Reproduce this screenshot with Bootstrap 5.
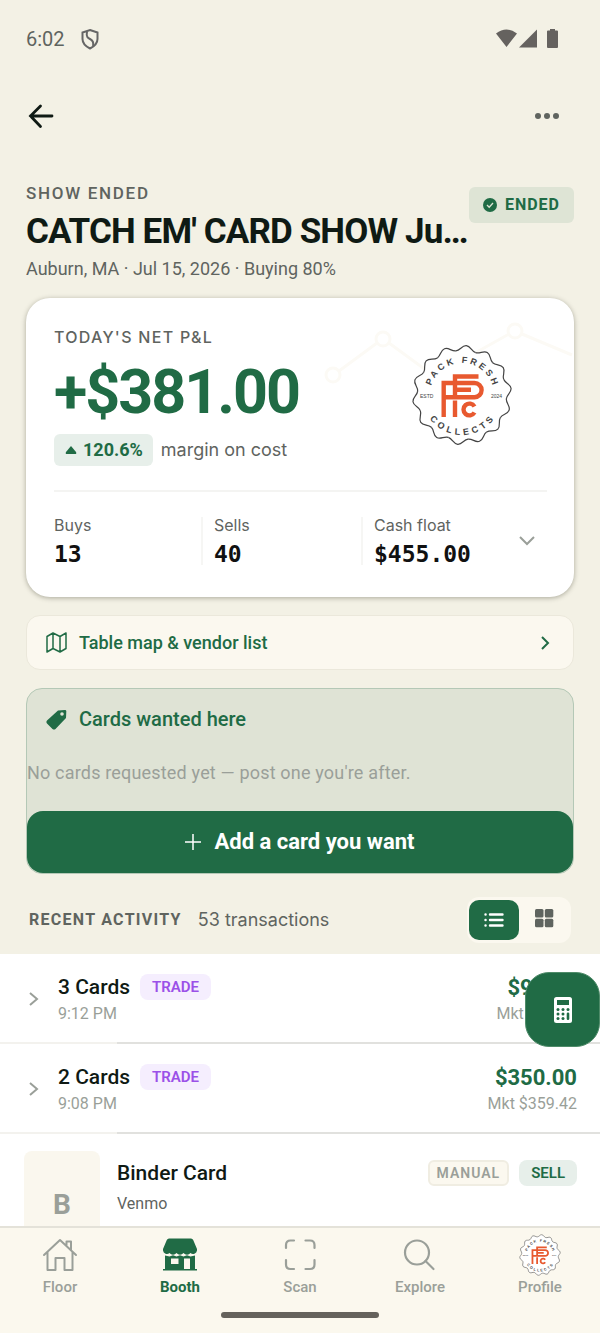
<!DOCTYPE html>
<html lang="en">
<head>
<meta charset="utf-8">
<meta name="viewport" content="width=device-width, initial-scale=1">
<title>Booth</title>
<link href="https://cdn.jsdelivr.net/npm/bootstrap@5.3.0/dist/css/bootstrap.min.css" rel="stylesheet">
<style>
:root{--green:#206b45;--ink:#0f1a14;--muted-ink:#5f645f;--soft:#9a9f99;--page:#f3f1e5;--cream:#fbf8ef}
body{font-family:Roboto,sans-serif;background:var(--page);color:var(--ink);font-size:18px;line-height:24px}
button{font-family:inherit}
a{text-decoration:none;color:inherit}
svg{display:block;flex:none}
.inter{font-family:Inter,sans-serif}
.soft{color:var(--soft)}
.dim{color:var(--muted-ink)}
.green{color:var(--green)}
.app-screen{height:100vh;overflow:hidden}
.status-bar{height:77px;padding:0 40px 0 26px;font-size:20px}
.top-bar{height:77px;padding:0 33px 0 26px}
.icon-btn{border:0;background:none;padding:0}
.gutter{padding:29px 26px 0}
.eyebrow{font-size:17px;letter-spacing:.1em;font-weight:500;line-height:20px}
.eyebrow.inter{font-size:16px;letter-spacing:.08em}
.show-title{font-size:35px;line-height:44px;font-weight:700;letter-spacing:-.025em;margin:7px 0 3px}
.ended{background:#dee4d5;border-radius:6px;height:36px;margin-top:4px;padding:0 14px;gap:8px;font-size:16px;font-weight:700;letter-spacing:1px}
.pnl{background:#fff;border-radius:24px;box-shadow:0 1px 5px rgba(60,60,40,.4);margin-top:17px;padding:29px 27px 32px 28px;position:relative}
.pnl-total{font-size:61px;line-height:64px;font-weight:700;letter-spacing:-2px;margin:13px 0 10px}
.margin-chip{background:#e7efea;border-radius:6px;height:32px;padding:0 10px 0 11px;gap:6px;font-weight:700}
.trend{position:absolute;right:0;top:14px;width:250px}
.pnl-seal{margin:17px 34px 0 0}
.stats{display:grid;grid-template-columns:147fr 160fr 186fr;border-top:2px solid #f4f4f2;margin-top:24px;padding-top:25px}
.stat{height:48px;font-size:16px;line-height:16px}
.stat + .stat{border-left:2px solid #f6f6f4;padding-left:11px}
.stat b{display:block;font:700 23px/24px "DejaVu Sans Mono",monospace;color:#111;margin-top:9px}
.map-link{height:55px;border:1px solid #ebe8db;border-radius:14px;background:var(--cream);margin-top:18px;padding:0 22px 0 19px;font-weight:500}
.wanted{border:1px solid #b4c8b6;border-radius:16px;background:#dfe3d5;margin-top:18px}
.wanted-title{font-size:20px;line-height:24px;font-weight:500;padding:18px 19px;gap:12px}
.wanted-note{padding:12px 0 26px;letter-spacing:.01em}
.add-btn{background:var(--green);border:0;border-radius:16px;height:62px;color:#fff;font-size:22px;font-weight:700;gap:13px}
.activity-head{height:80px;padding:12px 29px 0}
.activity-head h2{font-size:16px;letter-spacing:.08em;font-weight:700;line-height:24px}
.view-toggle{background:var(--cream);border-radius:12px;padding:3px 2px}
.view-toggle button{border:0;background:none;width:50px;height:40px;border-radius:10px;padding:0}
.view-toggle button.on{background:var(--green)}
.activity{background:#fff;min-height:0}
.txn{height:90px;padding:0 23px 0 28px;gap:18px}
.txn::after,.txn::before{content:"";position:absolute;left:117px;right:0;bottom:0;height:2px;background:#e1e1de}
.txn::before{left:0;right:auto;width:117px;background:#f3f2ee}
.chip-row{gap:10px}
.txn-name{font-size:21px;font-weight:500}
.amount{font-size:22px;line-height:28px;font-weight:700}
.tag-chip{border-radius:8px;height:26px;padding:0 12px;font-size:15px;font-weight:600;line-height:26px}
.trade{background:#f5eefe;color:#9b51e8}
.sell{background:#e7efea;color:var(--green)}
.manual{background:var(--cream);color:var(--soft);border:2px solid #f0ede2;letter-spacing:1px;font-size:14px;line-height:22px;padding:0 7px;border-radius:6px}
.meta{font-size:16px;line-height:20px}
.txn .meta{padding-top:4px}
.txn .amount + .meta{padding-top:2px}
.calc-btn{position:absolute;right:0;top:18px;width:75px;height:75px;border-radius:24px;border:1px solid #4f8b69;background:var(--green);padding:0;z-index:2}
.binder{padding:17px 23px 0 24px;gap:17px}
.binder-body{padding-top:9px}
.thumb{width:76px;height:108px;border-radius:8px;background:#faf7ee;font-size:28px;font-weight:700}
.tab-bar{background:#fbf8ee;border-top:2px solid #e4e2d9;height:107px}
.tab-bar a{width:20%;font-size:15px;line-height:20px;font-weight:500;color:var(--soft);padding-top:6px;gap:1px}
.tab-bar a.active{color:var(--green);font-weight:700}
.home-pill{bottom:15px;width:158px;height:6px;border-radius:3px;background:#65625c}
.seal-text{font-family:"Liberation Sans",sans-serif;font-weight:700;fill:#444}
.seal-year{font-weight:400}
</style>
</head>
<body>
<svg width="0" height="0" class="position-absolute" aria-hidden="true">
  <defs>
    <path id="scallop" d="M-9.900-43.400C-5.500-44.400-4.500-49.500 0-49.500S5.500-44.400 9.900-43.400"/>
    <path id="arc-top" d="M-32 0A32 32 0 0 1 32 0"/>
    <path id="arc-bottom" d="M-40 0A40 40 0 0 0 40 0"/>
    <g id="scallop-half">
      <use href="#scallop"/><use href="#scallop" transform="rotate(25.714)"/><use href="#scallop" transform="rotate(51.429)"/><use href="#scallop" transform="rotate(77.143)"/><use href="#scallop" transform="rotate(102.857)"/><use href="#scallop" transform="rotate(128.571)"/><use href="#scallop" transform="rotate(154.286)"/>
    </g>
    <symbol id="seal" viewBox="-51 -51 102 102">
      <circle r="44.500" fill="#fff"/>
      <g fill="#fff" stroke="#444" stroke-width="1.200" transform="rotate(5)"><use href="#scallop-half"/><use href="#scallop-half" transform="rotate(180)"/></g>
      <text class="seal-text" font-size="9" letter-spacing="2.600" text-anchor="middle"><textPath href="#arc-top" startOffset="51%">PACK FRESH</textPath></text>
      <text class="seal-text" font-size="9" letter-spacing="3.600" text-anchor="middle"><textPath href="#arc-bottom" startOffset="51%">COLLECTS</textPath></text>
      <text class="seal-text seal-year" font-size="5" x="-42" y="3">ESTD</text>
      <text class="seal-text seal-year" font-size="5" x="29" y="3">2024</text>
      <g fill="none" stroke="#e8592f" stroke-width="4.400">
        <path d="M-18.300 22V-12H12.500a7 7 0 0 1 0 14.200H-18M-7 -3V-18.500H16.500M-7-5.300H9M-7-7V2M-7 5.500V22M12.500 11.500A5.900 5.900 0 1 0 12.500 17.500"/>
      </g>
    </symbol>
  </defs>
</svg>
<main class="app-screen d-flex flex-column position-relative">
  <div class="status-bar d-flex align-items-center justify-content-between dim flex-shrink-0">
    <div class="d-flex align-items-center gap-3">
      <span>6:02</span>
      <svg width="18" height="22" viewBox="0 0 18 22" fill="none" stroke="#666" stroke-width="2"><path d="M9 2 16.500 4.500V11c0 4.500-3.500 7.500-7.500 9.500-4-2-7.500-5-7.500-9.500V4.500z"/><path d="M6 3.500C5 9 7 10 9 11s4 3 3 7"/></svg>
    </div>
    <svg width="64" height="22" viewBox="0 0 64 22" fill="#65625f"><path d="M0 5.500Q10.500-2.500 21 5.500L10.500 19zM41 1.500v18H23zM54 1h5v1.500h2q1 0 1 1V19q0 1-1 1h-9q-1 0-1-1V3.500q0-1 1-1h2z"/></svg>
  </div>
  <div class="top-bar d-flex align-items-center justify-content-between flex-shrink-0">
    <button class="icon-btn" aria-label="Back"><svg width="28" height="28" viewBox="0 0 28 28" fill="none" stroke="#0f1a14" stroke-width="2.800" stroke-linecap="round"><path d="M14.500 4 4.500 14l10 10.500M4.500 14H26"/></svg></button>
    <button class="icon-btn" aria-label="More"><svg width="40" height="8" viewBox="0 0 40 8" fill="#5f645f"><circle cx="11" cy="4" r="3"/><circle cx="20" cy="4" r="3"/><circle cx="29" cy="4" r="3"/></svg></button>
  </div>
  <div class="gutter flex-shrink-0">
    <header class="d-flex align-items-start justify-content-between">
      <div>
        <div class="eyebrow dim">SHOW ENDED</div>
        <h1 class="show-title text-nowrap">CATCH EM' CARD SHOW Ju…</h1>
        <div class="dim">Auburn, MA · Jul 15, 2026 · Buying 80%</div>
      </div>
      <span class="ended green d-flex align-items-center"><svg width="14" height="14" viewBox="0 0 14 14"><circle cx="7" cy="7" r="7" fill="#206b45"/><path d="m4 7 2.200 2.300L10 5" fill="none" stroke="#dee4d5" stroke-width="1.300"/></svg>ENDED</span>
    </header>
    <section class="pnl">
      <svg class="trend" height="90" viewBox="0 0 250 90" fill="none" stroke="#fcfaf5" stroke-width="3"><circle cx="9" cy="63" r="7"/><circle cx="59" cy="27" r="7"/><circle cx="191" cy="19" r="7"/><path d="m15 59 38-28M65 31l45 33 75-42M198 22l50 21"/></svg>
      <div class="d-flex justify-content-between position-relative">
        <div>
          <div class="eyebrow inter dim">TODAY'S NET P&amp;L</div>
          <div class="pnl-total green">+$381.00</div>
          <div class="d-flex align-items-center">
            <span class="margin-chip green d-flex align-items-center"><svg width="12" height="8" viewBox="0 0 12 8" fill="#206b45"><path d="M6 0l5 6q1 2-1 2H2Q0 8 1 6z"/></svg>120.6%</span>
            <span class="inter dim ms-2">margin on cost</span>
          </div>
        </div>
        <svg class="pnl-seal" width="102" height="102" role="img" aria-label="Pack Fresh Collects"><use href="#seal"/></svg>
      </div>
      <div class="stats">
        <div class="stat inter dim">Buys<b>13</b></div>
        <div class="stat inter dim">Sells<b>40</b></div>
        <div class="stat inter dim d-flex align-items-center justify-content-between">
          <div>Cash float<b>$455.00</b></div>
          <button class="icon-btn me-2" aria-label="Show more"><svg width="24" height="16" viewBox="0 0 24 16" fill="none" stroke="#9a9f99" stroke-width="2"><path d="m5 4 7 7 7-7"/></svg></button>
        </div>
      </div>
    </section>
    <a href="#" class="map-link green d-flex align-items-center">
      <svg width="21" height="21" viewBox="0 0 21 21" fill="none" stroke="#206b45" stroke-width="1.500" stroke-linejoin="round"><path d="M1 4.500 7 1l7 3.500L20 1v15.500L14 20l-7-3.500L1 20zM7 1v15.500M14 4.500V20"/></svg>
      <span class="ms-2 ps-1">Table map &amp; vendor list</span>
      <svg class="ms-auto" width="12" height="16" viewBox="0 0 12 16" fill="none" stroke="#206b45" stroke-width="2"><path d="m3 2 6 6-6 6"/></svg>
    </a>
    <section class="wanted">
      <h2 class="wanted-title green d-flex align-items-center m-0"><svg width="21" height="21" viewBox="0 0 21 21"><path d="M12 1.500 19 1q1.500 0 1.300 1.500L20 9 9.500 20q-1.500 1.200-3 0L1 14.500q-1.200-1.500 0-3z" fill="#206b45"/><circle cx="16" cy="5" r="1.800" fill="#dfe3d5"/></svg>Cards wanted here</h2>
      <p class="wanted-note soft m-0">No cards requested yet — post one you're after.</p>
      <button class="add-btn w-100 d-flex align-items-center justify-content-center"><svg width="16" height="16" viewBox="0 0 16 16" stroke="#fff" stroke-width="1.500"><path d="M8 0v16M0 8h16"/></svg>Add a card you want</button>
    </section>
  </div>
  <div class="activity-head d-flex align-items-center justify-content-between flex-shrink-0">
    <div class="d-flex align-items-center gap-3">
      <h2 class="dim m-0">RECENT ACTIVITY</h2>
      <span class="inter dim">53 transactions</span>
    </div>
    <div class="view-toggle d-flex">
      <button class="on d-flex align-items-center justify-content-center" aria-label="List view"><svg width="20" height="14" viewBox="0 0 20 14" stroke="#fff" stroke-width="2.400" stroke-linecap="round"><path d="M6 1.500h12.500M6 7h12.500M6 12.500h12.500M1.500 1.500h.1M1.500 7h.1M1.500 12.500h.1"/></svg></button>
      <button class="d-flex align-items-center justify-content-center" aria-label="Grid view"><svg width="20" height="22" viewBox="0 0 20 22" fill="#5f645f"><rect x="1" width="8.500" height="8.500" rx="1.500"/><rect x="10.800" width="8.500" height="8.500" rx="1.500"/><rect x="1" y="9.800" width="8.500" height="8.500" rx="1.500"/><rect x="10.800" y="9.800" width="8.500" height="8.500" rx="1.500"/></svg></button>
    </div>
  </div>
  <section class="activity flex-grow-1 position-relative overflow-hidden">
    <div class="txn d-flex align-items-center position-relative">
      <svg width="12" height="16" viewBox="0 0 12 16" fill="none" stroke="#9a9f99" stroke-width="2"><path d="m2 2 7 6-7 6"/></svg>
      <div class="flex-grow-1">
        <div class="chip-row d-flex align-items-center"><span class="txn-name">3 Cards</span><span class="tag-chip trade">TRADE</span></div>
        <div class="meta soft">9:12 PM</div>
      </div>
      <div class="text-end"><div class="amount green">$95.00</div><div class="meta soft">Mkt $98.50</div></div>
    </div>
    <div class="txn d-flex align-items-center position-relative">
      <svg width="12" height="16" viewBox="0 0 12 16" fill="none" stroke="#9a9f99" stroke-width="2"><path d="m2 2 7 6-7 6"/></svg>
      <div class="flex-grow-1">
        <div class="chip-row d-flex align-items-center"><span class="txn-name">2 Cards</span><span class="tag-chip trade">TRADE</span></div>
        <div class="meta soft">9:08 PM</div>
      </div>
      <div class="text-end"><div class="amount green">$350.00</div><div class="meta soft">Mkt $359.42</div></div>
    </div>
    <div class="binder d-flex">
      <div class="thumb soft d-flex align-items-center justify-content-center flex-shrink-0">B</div>
      <div class="binder-body flex-grow-1">
        <div class="chip-row d-flex align-items-center">
          <span class="txn-name flex-grow-1">Binder Card</span>
          <span class="tag-chip manual">MANUAL</span><span class="tag-chip sell">SELL</span>
        </div>
        <div class="meta dim pt-2">Venmo</div>
      </div>
    </div>
    <button class="calc-btn d-flex align-items-center justify-content-center" aria-label="Calculator"><svg width="20" height="28" viewBox="0 0 20 28"><rect x="1" y="1" width="18" height="26" rx="2.500" fill="#fff"/><path d="M4 4h12v5H4z" fill="#206b45"/><g fill="#206b45"><circle cx="5" cy="13.500" r="1.500"/><circle cx="10" cy="13.500" r="1.500"/><circle cx="15" cy="13.500" r="1.500"/><circle cx="5" cy="18" r="1.500"/><circle cx="10" cy="18" r="1.500"/><circle cx="5" cy="22.500" r="1.500"/><circle cx="10" cy="22.500" r="1.500"/><rect x="13.700" y="16.500" width="2.600" height="7.500" rx="1.300"/></g></svg></button>
  </section>
  <nav class="tab-bar d-flex position-relative flex-shrink-0">
    <a href="#" class="d-flex flex-column align-items-center"><svg width="42" height="42" viewBox="0 0 42 42" fill="none" stroke="#9a9f99" stroke-width="2" stroke-linejoin="round" stroke-linecap="round"><path d="M5 21 21 6l16 15M8.500 18v18h8V24h9v12h8V18M27.500 12V7.500H32V16"/></svg>Floor</a>
    <a href="#" class="active d-flex flex-column align-items-center"><svg width="42" height="42" viewBox="0 0 42 42" fill="#206b45"><path d="M10 4.500h22q1.500 0 2.200 1.500L38 15v1.500a4 4 0 0 1-6.500 2.500 4.500 4.500 0 0 1-7 0 4.500 4.500 0 0 1-7 0 4.500 4.500 0 0 1-7 0A4 4 0 0 1 4 16.500V15l3.800-9Q8.500 4.500 10 4.500z"/><path fill-rule="evenodd" d="M6 21.500l4.500 1 3.500-1.300 3.500 1.300 3.500-1.300 3.500 1.300 3.500-1.300 3.500 1.300 4.500-1V35H38v1.500H4V35h2zM12 24.500v5.500h7.500v-5.500zm13 0V35H31V24.500z"/></svg>Booth</a>
    <a href="#" class="d-flex flex-column align-items-center"><svg width="42" height="42" viewBox="0 0 42 42" fill="none" stroke="#9a9f99" stroke-width="2.200" stroke-linecap="round"><path d="M7 14V11q0-4.500 4.500-4.500H15M26.500 6.500H31q4.500 0 4.500 4.500v3M35.500 26v4.500q0 4.500-4.500 4.500h-4.500M15 35h-3.500Q7 35 7 30.500V26"/></svg>Scan</a>
    <a href="#" class="d-flex flex-column align-items-center"><svg width="42" height="42" viewBox="0 0 42 42" fill="none" stroke="#9a9f99" stroke-width="2.200" stroke-linecap="round"><circle cx="18" cy="18.500" r="12"/><path d="m26.500 27 8 8"/></svg>Explore</a>
    <a href="#" class="d-flex flex-column align-items-center"><svg width="42" height="42"><use href="#seal"/></svg>Profile</a>
    <div class="home-pill position-absolute start-50 translate-middle-x"></div>
  </nav>
</main>
</body>
</html>
